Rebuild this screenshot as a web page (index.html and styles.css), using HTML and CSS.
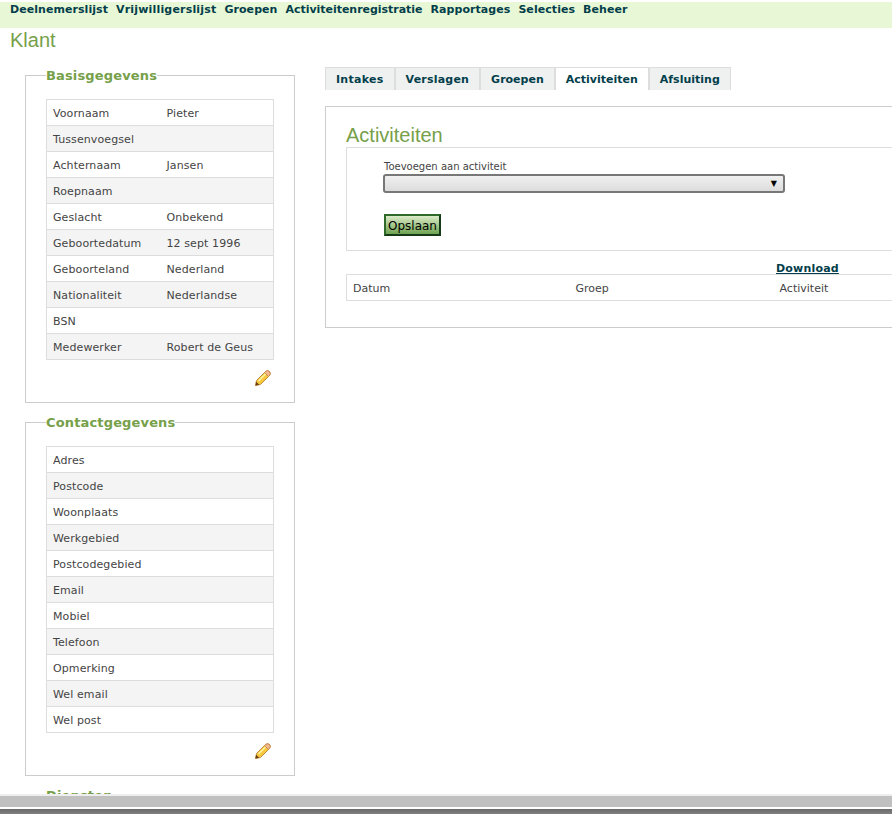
FILE: index.html
```html
<!DOCTYPE html>
<html lang="nl">
<head>
  <meta charset="UTF-8">
  <title>Klant</title>
  <link rel="stylesheet" href="styles.css">
</head>
<body>
  <div class="content">
    <ul class="menu">
      <li><a href="#">Deelnemerslijst</a></li>
      <li class="menu-wide"><a href="#">Vrijwilligerslijst</a></li>
      <li><a href="#">Groepen</a></li>
      <li class="menu-narrow"><a href="#">Activiteitenregistratie</a></li>
      <li><a href="#">Rapportages</a></li>
      <li><a href="#">Selecties</a></li>
      <li><a href="#">Beheer</a></li>
    </ul>
    <h1>Klant</h1>

    <div class="columns">
      <div class="left">
        <fieldset class="box">
          <legend>Basisgegevens</legend>
          <table class="data">
            <tr><td class="label">Voornaam</td><td>Pieter</td></tr>
            <tr><td class="label">Tussenvoegsel</td><td></td></tr>
            <tr><td class="label">Achternaam</td><td>Jansen</td></tr>
            <tr><td class="label">Roepnaam</td><td></td></tr>
            <tr><td class="label">Geslacht</td><td>Onbekend</td></tr>
            <tr><td class="label">Geboortedatum</td><td>12 sept 1996</td></tr>
            <tr><td class="label">Geboorteland</td><td>Nederland</td></tr>
            <tr><td class="label">Nationaliteit</td><td>Nederlandse</td></tr>
            <tr><td class="label">BSN</td><td></td></tr>
            <tr><td class="label">Medewerker</td><td>Robert de Geus</td></tr>
          </table>
          <div class="edit">
            <svg width="16" height="16" viewBox="0 0 16 16"><path d="M0.5 15.5 L1.5 10.5 L10.5 1.5 Q12.5 0 14.5 1.5 Q16 3.5 14.5 5.5 L5.5 14.5 Z" fill="#f7c83c" stroke="#c08a3e"/><path d="M10.5 1.5 Q12.5 0 14.5 1.5 Q16 3.5 14.5 5.5 L13.5 6.5 L9.5 2.5 Z" fill="#f4b98f" stroke="#c98a55"/><path d="M3.5 11 L10.5 4" stroke="#fdf2a8" stroke-width="1.5"/><path d="M0.5 15.5 L1.2 11.8 L4.2 14.8 Z" fill="#6b3f14"/></svg>
          </div>
        </fieldset>

        <fieldset class="box">
          <legend>Contactgegevens</legend>
          <table class="data">
            <tr><td class="label">Adres</td><td></td></tr>
            <tr><td class="label">Postcode</td><td></td></tr>
            <tr><td class="label">Woonplaats</td><td></td></tr>
            <tr><td class="label">Werkgebied</td><td></td></tr>
            <tr><td class="label">Postcodegebied</td><td></td></tr>
            <tr><td class="label">Email</td><td></td></tr>
            <tr><td class="label">Mobiel</td><td></td></tr>
            <tr><td class="label">Telefoon</td><td></td></tr>
            <tr><td class="label">Opmerking</td><td></td></tr>
            <tr><td class="label">Wel email</td><td></td></tr>
            <tr><td class="label">Wel post</td><td></td></tr>
          </table>
          <div class="edit">
            <svg width="16" height="16" viewBox="0 0 16 16"><path d="M0.5 15.5 L1.5 10.5 L10.5 1.5 Q12.5 0 14.5 1.5 Q16 3.5 14.5 5.5 L5.5 14.5 Z" fill="#f7c83c" stroke="#c08a3e"/><path d="M10.5 1.5 Q12.5 0 14.5 1.5 Q16 3.5 14.5 5.5 L13.5 6.5 L9.5 2.5 Z" fill="#f4b98f" stroke="#c98a55"/><path d="M3.5 11 L10.5 4" stroke="#fdf2a8" stroke-width="1.5"/><path d="M0.5 15.5 L1.2 11.8 L4.2 14.8 Z" fill="#6b3f14"/></svg>
          </div>
        </fieldset>

        <fieldset class="box">
          <legend>Diensten</legend>
        </fieldset>
      </div>

      <div class="right">
        <ul class="tabs">
          <li class="tab-intakes"><a href="#">Intakes</a></li>
          <li class="tab-verslagen"><a href="#">Verslagen</a></li>
          <li><a href="#">Groepen</a></li>
          <li class="active"><a href="#">Activiteiten</a></li>
          <li><a href="#">Afsluiting</a></li>
        </ul>
        <div class="panel">
          <h2>Activiteiten</h2>
          <form class="addform">
            <label for="activiteit">Toevoegen aan activiteit</label>
            <div class="select" id="activiteit"><span class="arrow">▼</span></div>
            <button type="button" class="save">Opslaan</button>
          </form>
          <div class="download"><a href="#">Download</a></div>
          <table class="list">
            <tr><td class="col-datum">Datum</td><td class="col-groep">Groep</td><td>Activiteit</td></tr>
          </table>
        </div>
      </div>
    </div>
  </div>

  <div class="footer">
    <div class="footer-top"></div>
    <div class="footer-bottom"></div>
  </div>
</body>
</html>
```

FILE: styles.css
```css
html, body {
  margin: 0;
  height: 814px;
  overflow: hidden;
  background: #fff;
}
body {
  display: flex;
  flex-direction: column;
  font-family: "DejaVu Sans", sans-serif;
  font-size: 11px;
  color: #444;
}
a {
  color: #033e4a;
  text-decoration: none;
  font-weight: bold;
}
.content {
  height: 794px;
  overflow: hidden;
  padding-top: 2px;
  box-sizing: border-box;
}
.menu {
  list-style: none;
  margin: 0;
  padding: 0 0 0 10px;
  height: 26px;
  background-color: #e8f8d6;
  display: flex;
  gap: 8px;
  line-height: 15px;
  letter-spacing: 0.06px;
}
.menu-wide {
  letter-spacing: 0.18px;
}
.menu-narrow {
  letter-spacing: -0.03px;
}
h1 {
  margin: 0;
  padding-left: 10px;
  height: 24px;
  font-family: "Liberation Sans", sans-serif;
  font-size: 20px;
  font-weight: normal;
  line-height: 24px;
  color: #76a04a;
}
.columns {
  display: flex;
  padding-top: 14px;
}
.left {
  width: 270px;
  margin-left: 25px;
  flex: none;
}
.box {
  margin: 0 0 10px;
  padding: 15px 20px 0;
  border: 1px solid #ccc;
  min-width: 0;
}
legend {
  padding: 2px 0 0;
  font-size: 13px;
  font-weight: bold;
  line-height: 16px;
  letter-spacing: 0.15px;
  color: #76a04a;
}
.data {
  width: 228px;
  border-collapse: collapse;
  table-layout: fixed;
  letter-spacing: 0.1px;
}
.data td {
  height: 26px;
  padding: 1px 6px 0;
  box-sizing: border-box;
  border-top: 1px solid #ddd;
  border-bottom: 1px solid #ddd;
  white-space: nowrap;
}
.data td:first-child {
  border-left: 1px solid #ddd;
}
.data td:last-child {
  border-right: 1px solid #ddd;
}
.data .label {
  width: 114px;
}
.data tr:nth-child(even) td {
  background-color: #f4f4f4;
}
.edit {
  display: flex;
  justify-content: flex-end;
  padding: 10px 3px 16px 0;
  width: 225px;
}
.edit svg {
  display: block;
}
.right {
  margin: 1px 0 0 30px;
  flex: none;
  width: 700px;
}
.tabs {
  list-style: none;
  margin: 0;
  padding: 0;
  display: flex;
  height: 23px;
}
.tabs li {
  background-color: #eff1f1;
  border: 1px solid #ddd;
  border-bottom: 0;
  padding: 0 10px;
  line-height: 24px;
}
.tabs li.active {
  background-color: #fff;
}
.tab-intakes {
  letter-spacing: 0.28px;
}
.tab-verslagen {
  letter-spacing: 0.2px;
}
.panel {
  margin-top: 16px;
  height: 222px;
  box-sizing: border-box;
  border: 1px solid #ccc;
  padding: 17px 0 0 20px;
}
h2 {
  margin: 0;
  height: 23px;
  font-family: "Liberation Sans", sans-serif;
  font-size: 20px;
  font-weight: normal;
  line-height: 22px;
  color: #76a04a;
}
.addform {
  height: 104px;
  box-sizing: border-box;
  border: 1px solid #ddd;
  padding: 12px 0 0 36px;
}
.addform label {
  display: block;
  margin-left: 1px;
  font-size: 10px;
  line-height: 13px;
}
.select {
  width: 392px;
  height: 15px;
  margin-top: 1px;
  display: flex;
  justify-content: flex-end;
  align-items: center;
  padding-right: 6px;
  border: 2px solid #777;
  border-radius: 3px;
  background: linear-gradient(#f0f0f0, #dcdcdc);
  font-size: 8px;
  color: #000;
}
.save {
  display: block;
  margin: 21px 0 0 1px;
  width: 57px;
  height: 22px;
  padding: 1px 0 0;
  border: 2px solid;
  border-color: #2f6a2a #143a18 #143a18 #2f6a2a;
  background: linear-gradient(#dcebc8, #6fa350);
  font-family: "DejaVu Sans", sans-serif;
  font-size: 12px;
  color: #000;
}
.download {
  margin-top: 11px;
  height: 12px;
  padding-left: 430px;
  line-height: 13px;
  letter-spacing: 0.2px;
}
.download a {
  text-decoration: underline;
}
.list {
  width: 560px;
  border-collapse: collapse;
  table-layout: fixed;
}
.list td {
  height: 26px;
  padding: 1px 6px 0;
  box-sizing: border-box;
  border: 1px solid #ddd;
  border-width: 1px 0;
}
.list td:first-child {
  border-left: 1px solid #ddd;
}
.col-datum {
  width: 223px;
}
.col-groep {
  width: 204px;
}
.footer {
  flex: none;
  height: 20px;
  display: flex;
  flex-direction: column;
}
.footer-top {
  height: 11px;
  border-top: 2px solid #eee;
  background-color: #c0c0c0;
}
.footer-bottom {
  margin-top: 2px;
  height: 5px;
  background: linear-gradient(#6a6a6a, #808080);
}
```
